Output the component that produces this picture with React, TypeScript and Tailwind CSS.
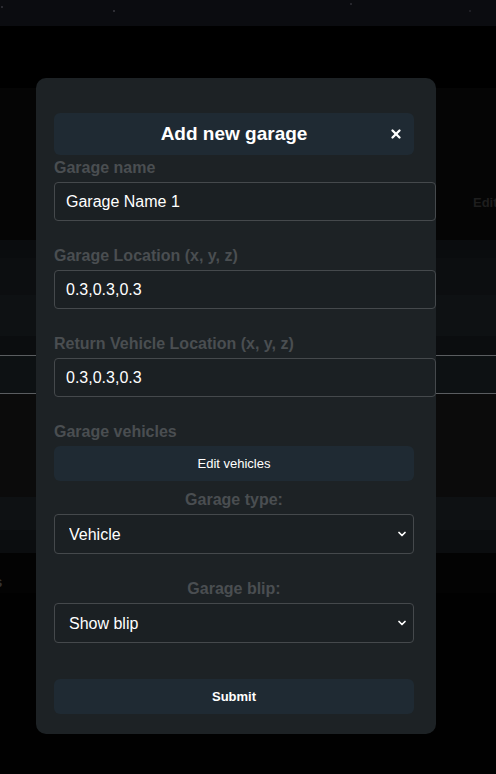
import { ChevronDown, X } from 'lucide-react'

const font = { fontFamily: '"Liberation Sans", Arial, sans-serif' }

function Label({ children, center = false }: { children: React.ReactNode; center?: boolean }) {
  return (
    <label
      className={`block text-[16px] leading-[20px] font-bold text-[#4a4e51] mb-[4px] ${center ? 'text-center' : ''}`}
    >
      {children}
    </label>
  )
}

function TextInput({ value }: { value: string }) {
  return (
    <input
      defaultValue={value}
      className="block w-[382px] h-[39px] rounded-[4px] border border-[#45494c] bg-[#1b2023] px-[11px] text-[16px] text-white outline-none"
    />
  )
}

function Select({ value }: { value: string }) {
  return (
    <div className="relative w-[360px] h-[40px]">
      <select
        defaultValue={value}
        className="appearance-none w-full h-full rounded-[4px] border border-[#45494c] bg-[#1b2023] pl-[14px] pt-px text-[16px] text-white outline-none"
      >
        <option>{value}</option>
      </select>
      <ChevronDown
        size={12}
        strokeWidth={3.5}
        className="absolute right-[6px] top-[14px] text-white pointer-events-none"
      />
    </div>
  )
}

function Background() {
  return (
    <div className="flex flex-col w-[496px] h-[774px] bg-black">
      <div className="relative h-[26px] bg-[#0b0c10]">
        <span className="absolute left-[1px] top-[6px] w-[2px] h-[2px] bg-[#2a2a30]" />
        <span className="absolute left-[113px] top-[10px] w-[2px] h-[2px] bg-[#2e2e34]" />
        <span className="absolute left-[350px] top-[3px] w-[2px] h-[2px] bg-[#26262c]" />
        <span className="absolute left-[469px] top-[10px] w-[2px] h-[2px] bg-[#1e1e24]" />
      </div>
      <div className="h-[62px]" />
      <div className="h-[152px] bg-[#050505] flex justify-end items-start">
        <span className="mt-[105px] mr-[-6px] text-[13px] text-[#1e1e1e] font-bold w-[29px]">Edit</span>
      </div>
      <div className="h-[18px] bg-[#0a0c0e]" />
      <div className="h-[37px] bg-[#0c0e10]" />
      <div className="h-[41px] bg-[#0e1113]" />
      <div className="h-[19px] bg-[#0b0d0f]" />
      <div className="h-px bg-[#5a5d60]" />
      <div className="h-[37px] bg-[#0d1113]" />
      <div className="h-px bg-[#5a5d60]" />
      <div className="h-[103px] bg-[#0b0b0b]" />
      <div className="h-[33px] bg-[#0e1113]" />
      <div className="h-[23px] bg-[#0b0d0f]" />
      <div className="h-[40px] bg-[#030303] flex items-end">
        <span className="text-[15px] text-[#333] font-bold -ml-[6px]">s</span>
      </div>
      <div className="flex-1 bg-[#010101]" />
    </div>
  )
}

export default function App() {
  return (
    <div className="relative w-[496px] h-[774px] overflow-hidden" style={font}>
      <Background />

      {/* modal overlay */}
      <div className="absolute left-[36px] top-[78px] w-[400px] h-[656px] rounded-[10px] bg-[#1d2225] pt-[35px] pl-[18px]">
        <div className="relative flex items-center justify-center w-[360px] h-[42px] rounded-[6px] bg-[#1f2a33]">
          <h2 className="text-[19px] font-bold text-white">Add new garage</h2>
          <X size={14} strokeWidth={4} className="absolute right-[11px] top-[14px] text-white" />
        </div>

        <div className="mt-[3px]">
          <Label>Garage name</Label>
          <TextInput value="Garage Name 1" />
        </div>
        <div className="mt-[25px]">
          <Label>Garage Location (x, y, z)</Label>
          <TextInput value="0.3,0.3,0.3" />
        </div>
        <div className="mt-[25px]">
          <Label>Return Vehicle Location (x, y, z)</Label>
          <TextInput value="0.3,0.3,0.3" />
        </div>
        <div className="mt-[25px]">
          <Label>Garage vehicles</Label>
          <button className="w-[360px] h-[35px] rounded-[6px] bg-[#1f2a33] text-[13px] text-white">
            Edit vehicles
          </button>
        </div>
        <div className="mt-[9px] w-[360px]">
          <Label center>Garage type:</Label>
          <Select value="Vehicle" />
        </div>
        <div className="mt-[25px] w-[360px]">
          <Label center>Garage blip:</Label>
          <Select value="Show blip" />
        </div>
        <button className="mt-[36px] w-[360px] h-[35px] rounded-[6px] bg-[#1f2a33] text-[13px] font-bold text-white">
          Submit
        </button>
      </div>
    </div>
  )
}
